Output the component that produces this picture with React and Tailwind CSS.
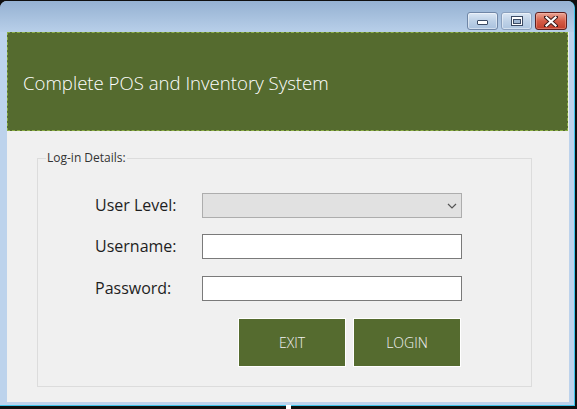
import React from "react";

function MinBtn() {
  return (
    <div className="w-[31px] h-[18px] rounded-[3px] border border-[#6f86a6] bg-gradient-to-b from-[#dce8f5] via-[#bcd0e6] to-[#a8c1de] shadow-[inset_0_0_0_1px_rgba(255,255,255,0.45)] flex items-center justify-center">
      <svg width="13" height="18" viewBox="0 0 13 18">
        <rect x="1.5" y="8.5" width="10" height="4" rx="0.5" fill="#ffffff" stroke="#3b4a63" strokeWidth="1" />
      </svg>
    </div>
  );
}

function MaxBtn() {
  return (
    <div className="w-[31px] h-[18px] rounded-[3px] border border-[#8aa0bd] bg-gradient-to-b from-[#dbe7f4] via-[#bfd2e7] to-[#adc5e0] shadow-[inset_0_0_0_1px_rgba(255,255,255,0.45)] flex items-center justify-center">
      <svg width="12" height="10" viewBox="0 0 12 10">
        <rect x="0.5" y="0.5" width="11" height="9" fill="#ffffff" stroke="#3b4a63" strokeWidth="1" />
        <rect x="2.5" y="3.5" width="7" height="4" fill="#9fb6d2" stroke="#3b4a63" strokeWidth="1" />
      </svg>
    </div>
  );
}

function CloseBtn() {
  return (
    <div className="w-[32px] h-[18px] rounded-[3px] border border-[#5e1f1f] bg-gradient-to-b from-[#e9a596] via-[#d55c46] to-[#c23e2b] shadow-[inset_0_0_0_1px_rgba(255,200,190,0.35)] flex items-center justify-center">
      <svg width="14" height="11" viewBox="0 0 14 11">
        <path d="M2 1 L12 10 M12 1 L2 10" stroke="#3a1a1a" strokeWidth="4" strokeLinecap="square" />
        <path d="M2.5 1.5 L11.5 9.5 M11.5 1.5 L2.5 9.5" stroke="#ffffff" strokeWidth="2.2" strokeLinecap="square" />
      </svg>
    </div>
  );
}

export default function App() {
  const ui = { fontFamily: '"Open Sans", "Noto Sans", sans-serif' };
  return (
    <div className="w-[577px] h-[409px] bg-[#0f0f0f] overflow-hidden relative" style={ui}>
      <div className="mt-[1px] w-[575px] h-[405px] rounded-t-[7px] bg-[#bdd3ec] flex flex-col border-b border-r border-[#3cc4e8]">
        {/* title bar */}
        <div className="h-[31px] shrink-0 rounded-t-[7px] bg-gradient-to-b from-[#95b1d2] to-[#b8cfe9] flex justify-end items-start pt-[11px] pr-[7px] gap-[3px]">
          <MinBtn />
          <MaxBtn />
          <CloseBtn />
        </div>
        {/* body */}
        <div className="flex-1 flex pl-[7px] pr-[5px] pb-[3px]">
          <div className="flex-1 flex flex-col bg-[#f0f0f0]">
            <div className="h-[99px] shrink-0 mr-[1px] bg-[#556b2f] border border-dashed border-[#8aad45] flex items-center pl-[15px] pt-[3px]">
              <span className="text-[18.6px] font-light text-white leading-none">
                Complete POS and Inventory System
              </span>
            </div>
            <div className="flex-1 flex flex-col ml-[30px] mr-[37px] mt-[27px] mb-[15px]">
              <div className="relative flex-1 border border-[#dcdcdc] pl-[57px] pt-[34px]">
                <span className="absolute left-[8px] top-[-9px] px-[1px] bg-[#f0f0f0] text-[12px] leading-[16px] text-[#333333]">
                  Log-in Details:
                </span>
                <div className="flex items-center h-[25px]">
                  <span className="w-[107px] text-[16px] leading-[25px] text-[#1e1e1e]">User Level:</span>
                  <div className="w-[260px] h-[25px] border border-[#adadad] bg-[#e1e1e1] flex items-center justify-end pr-[4px]">
                    <svg width="10" height="6" viewBox="0 0 10 6">
                      <path d="M1 1 L5 5 L9 1" fill="none" stroke="#555555" strokeWidth="1.2" />
                    </svg>
                  </div>
                </div>
                <div className="flex items-center h-[25px] mt-[16px]">
                  <span className="w-[107px] text-[16px] leading-[25px] text-[#1e1e1e]">Username:</span>
                  <div className="w-[260px] h-[25px] border border-[#7a7a7a] bg-white" />
                </div>
                <div className="flex items-center h-[25px] mt-[17px]">
                  <span className="w-[107px] text-[16px] leading-[25px] text-[#1e1e1e]">Password:</span>
                  <div className="w-[260px] h-[25px] border border-[#7a7a7a] bg-white" />
                </div>
                <div className="flex w-[367px] justify-end gap-[7px] pr-[1px] mt-[17px]">
                  <button className="w-[108px] h-[49px] border border-white bg-[#556b2f] text-[14px] font-light text-[#f2f2f2]">
                    EXIT
                  </button>
                  <button className="w-[108px] h-[49px] border border-white bg-[#556b2f] text-[14px] font-light text-[#f2f2f2]">
                    LOGIN
                  </button>
                </div>
              </div>
            </div>
          </div>
        </div>
      </div>
      <div className="absolute left-[286px] top-[405px] w-[5px] h-[4px] bg-white" />
    </div>
  );
}
